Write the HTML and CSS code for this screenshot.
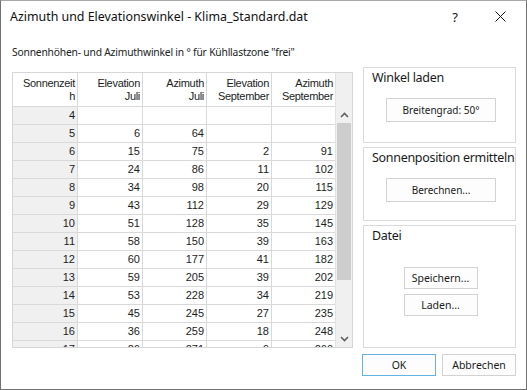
FILE: index.html
```html
<!DOCTYPE html>
<html>
<head>
<meta charset="utf-8">
<link rel="stylesheet" href="styles.css">
</head>
<body>
<div class="window">
  <div class="titlebar">
    <span class="title">Azimuth und Elevationswinkel - Klima_Standard.dat</span>
    <span class="help">?</span>
    <span class="close"><svg width="11" height="11" viewBox="0 0 11 11"><path d="M0.5 0.5L10.5 10.5M10.5 0.5L0.5 10.5" stroke="#111" stroke-width="1" fill="none"/></svg></span>
  </div>
  <div class="body">
    <div class="subtitle">Sonnenhöhen- und Azimuthwinkel in ° für Kühllastzone "frei"</div>
    <div class="main">
      <div class="grid">
        <div class="grid-scroll">
          <table class="data">
            <colgroup><col class="c1"><col class="c2"><col class="c3"><col class="c4"><col class="c5"></colgroup>
            <thead>
              <tr><th><span class="hl">Sonnenzeit</span><br><span class="hl">h</span></th><th><span class="hl">Elevation</span><br><span class="hl">Juli</span></th><th><span class="hl">Azimuth</span><br><span class="hl">Juli</span></th><th><span class="hl">Elevation</span><br><span class="hl">September</span></th><th><span class="hl">Azimuth</span><br><span class="hl">September</span></th></tr>
            </thead>
            <tbody>
              <tr><td class="rh">4</td><td></td><td></td><td></td><td></td></tr>
              <tr><td class="rh">5</td><td>6</td><td>64</td><td></td><td></td></tr>
              <tr><td class="rh">6</td><td>15</td><td>75</td><td>2</td><td>91</td></tr>
              <tr><td class="rh">7</td><td>24</td><td>86</td><td>11</td><td>102</td></tr>
              <tr><td class="rh">8</td><td>34</td><td>98</td><td>20</td><td>115</td></tr>
              <tr><td class="rh">9</td><td>43</td><td>112</td><td>29</td><td>129</td></tr>
              <tr><td class="rh">10</td><td>51</td><td>128</td><td>35</td><td>145</td></tr>
              <tr><td class="rh">11</td><td>58</td><td>150</td><td>39</td><td>163</td></tr>
              <tr><td class="rh">12</td><td>60</td><td>177</td><td>41</td><td>182</td></tr>
              <tr><td class="rh">13</td><td>59</td><td>205</td><td>39</td><td>202</td></tr>
              <tr><td class="rh">14</td><td>53</td><td>228</td><td>34</td><td>219</td></tr>
              <tr><td class="rh">15</td><td>45</td><td>245</td><td>27</td><td>235</td></tr>
              <tr><td class="rh">16</td><td>36</td><td>259</td><td>18</td><td>248</td></tr>
              <tr><td class="rh">17</td><td>26</td><td>271</td><td>9</td><td>260</td></tr>
            </tbody>
          </table>
        </div>
        <div class="scrollbar">
          <div class="sb-head"></div>
          <div class="sb-btn"><svg width="9" height="6" viewBox="0 0 9 6"><path d="M1 5L4.5 1.5L8 5" stroke="#606060" stroke-width="1.6" fill="none"/></svg></div>
          <div class="sb-track"><div class="sb-thumb"></div></div>
          <div class="sb-btn"><svg width="9" height="6" viewBox="0 0 9 6"><path d="M1 1L4.5 4.5L8 1" stroke="#606060" stroke-width="1.6" fill="none"/></svg></div>
        </div>
      </div>
      <div class="side">
        <div class="group g1">
          <div class="gtitle">Winkel laden</div>
          <div class="gbody"><button class="btn wide">Breitengrad: 50°</button></div>
        </div>
        <div class="group g2">
          <div class="gtitle">Sonnenposition ermitteln</div>
          <div class="gbody"><button class="btn wide">Berechnen...</button></div>
        </div>
        <div class="group g3">
          <div class="gtitle">Datei</div>
          <div class="gbody stack"><button class="btn">Speichern...</button><button class="btn">Laden...</button></div>
        </div>
      </div>
    </div>
    <div class="footer">
      <button class="btn ok">OK</button>
      <button class="btn">Abbrechen</button>
    </div>
  </div>
</div>
</body>
</html>
```
FILE: styles.css
```css
html, body {
  margin: 0;
  padding: 0;
  background: #ffffff;
}
.window {
  box-sizing: border-box;
  width: 527px;
  height: 390px;
  border: 1px solid #717171;
  border-top-color: #a8a8a8;
  background: #ffffff;
  display: flex;
  flex-direction: column;
  font-family: "Noto Sans", "Open Sans", sans-serif;
  color: #1a1a1a;
}
.titlebar {
  height: 31px;
  display: flex;
  align-items: center;
  padding-left: 9px;
  flex: none;
}
.title {
  font-size: 12.4px;
  color: #111;
  flex: 1;
}
.help {
  font-size: 13px;
  width: 46px;
  text-align: center;
  color: #111;
}
.close {
  width: 44px;
  height: 30px;
  margin-right: 4px;
  display: flex;
  align-items: center;
  justify-content: center;
}
.body {
  padding: 10px 10px 0 11px;
  display: flex;
  flex-direction: column;
  flex: 1;
}
.subtitle {
  font-size: 10.3px;
  letter-spacing: -0.2px;
  color: #222;
  height: 30px;
  line-height: 21px;
}
.main {
  display: flex;
  gap: 10px;
  height: 276px;
}
.grid {
  flex: none;
  width: 341px;
  height: 276px;
  box-sizing: border-box;
  border: 1px solid #d6d6d6;
  display: flex;
  overflow: hidden;
}
.grid-scroll {
  flex: none;
  width: 322px;
  overflow: hidden;
  height: 274px;
}
table.data {
  border-collapse: collapse;
  table-layout: fixed;
  width: 323px;
  margin-top: -1px;
  margin-left: -1px;
  font-family: "Liberation Sans", Arial, sans-serif;
  font-size: 11px;
  color: #1c1c1c;
}
col.c1 { width: 65px; }
col.c2 { width: 65px; }
col.c3 { width: 64px; }
col.c4 { width: 65px; }
col.c5 { width: 64px; }
table.data th, table.data td {
  border: 1px solid #d9d9d9;
  text-align: right;
  padding: 0 2px 0 0;
  font-weight: normal;
  overflow: hidden;
  white-space: nowrap;
  color: #1c1c1c;
}
table.data th {
  height: 32px;
  line-height: 13px;
  vertical-align: middle;
  padding-top: 1px;
  letter-spacing: -0.3px;
  background: #ffffff;
}
.hl {
  color: #1c1c1c;
}
table.data td {
  height: 17px;
  line-height: 17px;
  background: #ffffff;
}
table.data td.rh {
  background: #f0f0f0;
}
.scrollbar {
  flex: none;
  width: 16px;
  display: flex;
  flex-direction: column;
  background: #f0f0f0;
  border-left: 1px solid #e2e2e2;
}
.sb-head {
  height: 33px;
  flex: none;
}
.sb-btn {
  height: 17px;
  flex: none;
  display: flex;
  align-items: center;
  justify-content: center;
}
.sb-track {
  flex: 1;
  padding: 0 1px;
}
.sb-thumb {
  height: 157px;
  background: #cdcdcd;
}
.side {
  width: 153px;
  display: flex;
  flex-direction: column;
  gap: 4px;
  margin-top: -5px;
  height: 281px;
}
.group {
  box-sizing: border-box;
  border: 1px solid #d9d9d9;
  display: flex;
  flex-direction: column;
}
.g1 { height: 76px; }
.g2 { height: 74px; }
.g3 { flex: 1; }
.gtitle {
  font-size: 12.5px;
  letter-spacing: -0.3px;
  color: #1a1a1a;
  padding: 1px 0 0 8px;
  height: 20px;
  line-height: 18px;
  white-space: nowrap;
}
.gbody {
  display: flex;
  justify-content: center;
  padding-top: 9px;
  padding-left: 3px;
}
.gbody.stack {
  flex-direction: column;
  align-items: center;
  gap: 5px;
  padding-top: 20px;
  padding-left: 2px;
}
.btn {
  box-sizing: border-box;
  width: 74px;
  height: 22px;
  border: 1px solid #d2d2d2;
  background: #fdfdfd;
  font-family: "Noto Sans", "Open Sans", sans-serif;
  font-size: 10.5px;
  color: #1a1a1a;
  padding: 0;
  margin: 0;
}
.btn.wide {
  width: 110px;
  height: 24px;
  font-size: 10px;
}
.footer {
  display: flex;
  justify-content: flex-end;
  gap: 6px;
  padding-top: 6px;
}
.btn.ok {
  border-color: #63b4e6;
}
```
